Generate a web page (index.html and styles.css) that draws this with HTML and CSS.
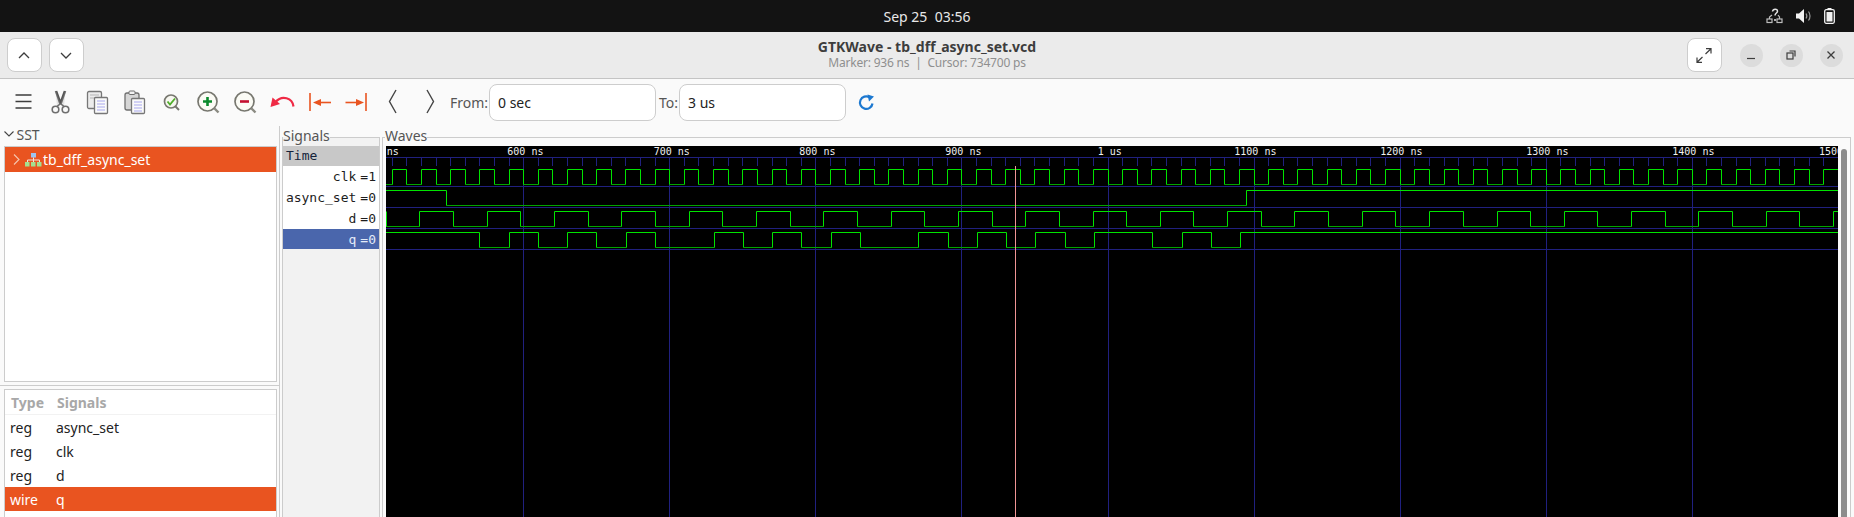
FILE: index.html
```html
<!DOCTYPE html>
<html lang="en">
<head>
    <meta charset="UTF-8">
    <title>GTKWave - tb_dff_async_set.vcd</title>
    <link rel="stylesheet" href="styles.css">
</head>
<body>
    <div class="topbar">
        <span class="clock">Sep 25&nbsp;&nbsp;03:56</span>
        <div class="tray">
            <svg width="17" height="16" viewBox="0 0 17 16" fill="none" stroke="#bdbdbd" stroke-width="1.2">
                <rect x="1" y="11" width="5" height="3.5"/>
                <rect x="11" y="11" width="5" height="3.5"/>
                <path d="M3.5 11V9L6 7M13.5 11V9L12 7"/>
                <path d="M6.5 3.5C7 0.5 11.5 0.5 11.5 3.2C11.5 5 9 5 9 7.5" stroke="#e4e4e4" stroke-width="1.5"/>
                <circle cx="9" cy="12" r="1" fill="#e4e4e4" stroke="none"/>
            </svg>
            <svg width="15" height="16" viewBox="0 0 15 16">
                <path d="M0 5.5H3L8 1V15L3 10.5H0Z" fill="#f2f2f2"/>
                <path d="M10 5.5C11 7 11 9 10 10.5M12.5 3.5C14.5 6 14.5 10 12.5 12.5" fill="none" stroke="#999" stroke-width="1.2"/>
            </svg>
            <svg width="11" height="16" viewBox="0 0 11 16">
                <rect x="3.5" y="0" width="4" height="2" fill="#f2f2f2"/>
                <rect x="0.7" y="1.7" width="9.6" height="13.6" rx="1.5" fill="none" stroke="#f2f2f2" stroke-width="1.3"/>
                <rect x="2.5" y="4" width="6" height="9.5" fill="#f2f2f2"/>
            </svg>
        </div>
    </div>

    <header class="titlebar">
        <div class="title-left">
            <button class="head-btn" type="button">
                <svg width="12" height="7" viewBox="0 0 12 7" fill="none" stroke="#3d3d3d" stroke-width="1.3"><path d="M1 6L6 1L11 6"/></svg>
            </button>
            <button class="head-btn" type="button">
                <svg width="12" height="7" viewBox="0 0 12 7" fill="none" stroke="#3d3d3d" stroke-width="1.3"><path d="M1 1L6 6L11 1"/></svg>
            </button>
        </div>
        <div class="title-text">
            <div class="title-main">GTKWave - tb_dff_async_set.vcd</div>
            <div class="title-sub">Marker: 936 ns&nbsp;&nbsp;|&nbsp;&nbsp;Cursor: 734700 ps</div>
        </div>
        <div class="title-right">
            <button class="head-btn" type="button">
                <svg width="16" height="15" viewBox="0 0 16 15" fill="none" stroke="#3d3d3d" stroke-width="1.2">
                    <path d="M9.5 6L15 0.7M10 0.7H15V5.5M6.5 9L1 14.3M1 9.5V14.3H6"/>
                </svg>
            </button>
            <div class="win-btns">
                <span class="win-btn"><svg width="10" height="10" viewBox="0 0 10 10" stroke="#3d3d3d" stroke-width="1.2"><path d="M1 8.5H9"/></svg></span>
                <span class="win-btn"><svg width="10" height="10" viewBox="0 0 10 10" fill="none" stroke="#3d3d3d" stroke-width="1.2"><rect x="1" y="3" width="6" height="6"/><path d="M3.5 1H9V6.5"/></svg></span>
                <span class="win-btn"><svg width="10" height="10" viewBox="0 0 10 10" stroke="#3d3d3d" stroke-width="1.3"><path d="M1.5 1.5L8.5 8.5M8.5 1.5L1.5 8.5"/></svg></span>
            </div>
        </div>
    </header>

    <div class="toolbar">
        <span class="tool">
            <svg width="37" height="37" viewBox="0 0 37 37" stroke="#3d3d3d" stroke-width="1.5"><path d="M10.5 11H26.5M10.5 17.5H26.5M10.5 24H26.5"/></svg>
        </span>
        <span class="tool">
            <svg width="37" height="37" viewBox="0 0 37 37" fill="none" stroke="#6f6f6f" stroke-width="1.6">
                <path d="M13.5 7L18 20L15 22.5M23.5 7L19 20L22 22.5" fill="#e4e4e4"/>
                <path d="M14.5 7L18.5 18L22.5 7" stroke="#555"/>
                <circle cx="13.5" cy="25.5" r="3.3"/>
                <circle cx="23.5" cy="25.5" r="3.3"/>
            </svg>
        </span>
        <span class="tool">
            <svg width="37" height="37" viewBox="0 0 37 37">
                <rect x="8.5" y="7.5" width="14" height="17" rx="1.5" fill="#ececec" stroke="#777" stroke-width="1.3"/>
                <path d="M11 11H20M11 14H20" stroke="#b5b5b5"/>
                <rect x="15.5" y="13.5" width="13" height="16" rx="1" fill="#fafafa" stroke="#777" stroke-width="1.3"/>
                <path d="M18 17H26M18 20H26M18 23H26M18 26H26" stroke="#a8a8ee"/>
            </svg>
        </span>
        <span class="tool">
            <svg width="37" height="37" viewBox="0 0 37 37">
                <rect x="9" y="9" width="14" height="17" rx="2" fill="#d6d6d6" stroke="#6f6f6f" stroke-width="1.3"/>
                <rect x="13" y="7" width="6" height="3.5" rx="1" fill="#f2f2f2" stroke="#6f6f6f"/>
                <rect x="15.5" y="14.5" width="13" height="15" rx="1" fill="#fafafa" stroke="#777" stroke-width="1.3"/>
                <path d="M18 18H26M18 21H26M18 24H26M18 27H26" stroke="#a8a8ee"/>
            </svg>
        </span>
        <span class="tool">
            <svg width="37" height="37" viewBox="0 0 37 37" fill="none">
                <circle cx="18" cy="17.5" r="6.5" fill="#f7f7f0" stroke="#77776f" stroke-width="1.7"/>
                <path d="M22.5 22.5L26 26" stroke="#77776f" stroke-width="2"/>
                <path d="M14.5 17.5L17 20.5L22 14.5" stroke="#4fae2a" stroke-width="1.8"/>
            </svg>
        </span>
        <span class="tool">
            <svg width="37" height="37" viewBox="0 0 37 37" fill="none">
                <circle cx="17.5" cy="17.5" r="9.5" fill="#fbfbf5" stroke="#77776f" stroke-width="1.7"/>
                <path d="M24.5 24.5L28.5 28.5" stroke="#8a8a82" stroke-width="2.4"/>
                <path d="M13 17.5H22M17.5 13V22" stroke="#0b8a2c" stroke-width="2.6"/>
            </svg>
        </span>
        <span class="tool">
            <svg width="37" height="37" viewBox="0 0 37 37" fill="none">
                <circle cx="17.5" cy="17.5" r="9.5" fill="#fbfbf5" stroke="#77776f" stroke-width="1.7"/>
                <path d="M24.5 24.5L28.5 28.5" stroke="#8a8a82" stroke-width="2.4"/>
                <path d="M13 17.5H22" stroke="#c4102f" stroke-width="2.6"/>
            </svg>
        </span>
        <span class="tool">
            <svg width="37" height="37" viewBox="0 0 37 37" fill="none">
                <path d="M29.5 22.5C28.5 14 18 10.5 11.5 18" stroke="#ef2a45" stroke-width="2.2"/>
                <path d="M6.5 23L8.5 13.5L16 20Z" fill="#ef2a45"/>
            </svg>
        </span>
        <span class="tool">
            <svg width="37" height="37" viewBox="0 0 37 37" fill="none">
                <path d="M9 9V27" stroke="#e95420" stroke-width="1.6"/>
                <path d="M17 18.5H30" stroke="#e95420" stroke-width="1.6"/>
                <path d="M12 18.5L20 15V22Z" fill="#e95420"/>
            </svg>
        </span>
        <span class="tool">
            <svg width="37" height="37" viewBox="0 0 37 37" fill="none">
                <path d="M28 9V27" stroke="#e95420" stroke-width="1.6"/>
                <path d="M7.5 18.5H20" stroke="#e95420" stroke-width="1.6"/>
                <path d="M26 18.5L18 15V22Z" fill="#e95420"/>
            </svg>
        </span>
        <span class="tool">
            <svg width="37" height="37" viewBox="0 0 37 37" fill="none" stroke="#444" stroke-width="1.4"><path d="M21 6L14.5 17.5L21 29"/></svg>
        </span>
        <span class="tool">
            <svg width="37" height="37" viewBox="0 0 37 37" fill="none" stroke="#444" stroke-width="1.4"><path d="M15 6L21.5 17.5L15 29"/></svg>
        </span>
        <label class="range-label from-label" for="fromTime">From:</label>
        <input class="range-input" id="fromTime" type="text" value="0 sec">
        <label class="range-label to-label" for="toTime">To:</label>
        <input class="range-input" id="toTime" type="text" value="3 us">
        <svg class="reload" width="17" height="17" viewBox="0 0 17 17" fill="none">
            <path d="M14.5 9.5A6.3 6.3 0 1 1 11.5 3.2" stroke="#1c78d0" stroke-width="2.2"/>
            <path d="M9.5 0.5L16 2.5L11 7.5Z" fill="#1c78d0"/>
        </svg>
    </div>

    <main class="panes">
        <aside class="left-pane">
            <div class="sst-head">
                <svg width="10" height="6" viewBox="0 0 10 6" fill="none" stroke="#444" stroke-width="1.1"><path d="M0.5 0.5L5 5L9.5 0.5"/></svg>
                <span>SST</span>
            </div>
            <div class="tree-box">
                <div class="tree-row">
                    <svg width="7" height="11" viewBox="0 0 7 11" fill="none" stroke="#f5c6b0" stroke-width="1.1"><path d="M1 0.5L6 5.5L1 10.5"/></svg>
                    <svg class="org-icon" width="17" height="14" viewBox="0 0 17 14">
                        <rect x="6" y="0" width="5" height="4.5" fill="#9fc4ee"/>
                        <path d="M8.5 4.5V7M2.5 9V7H14.5V9M8.5 7V9" stroke="#f6e3da" fill="none"/>
                        <rect x="0" y="9" width="4.5" height="4.5" fill="#a5e090"/>
                        <rect x="6" y="9" width="4.5" height="4.5" fill="#a5e090"/>
                        <rect x="12" y="9" width="4.5" height="4.5" fill="#a5e090"/>
                    </svg>
                    <span>tb_dff_async_set</span>
                </div>
            </div>
            <div class="pane-sep"></div>
            <div class="list-box">
                <div class="list-head">
                    <span class="col-type">Type</span>
                    <span>Signals</span>
                </div>
                <div class="list-row"><span class="col-type">reg</span><span>async_set</span></div>
                <div class="list-row"><span class="col-type">reg</span><span>clk</span></div>
                <div class="list-row"><span class="col-type">reg</span><span>d</span></div>
                <div class="list-row selected"><span class="col-type">wire</span><span>q</span></div>
            </div>
        </aside>

        <fieldset class="frame signals-frame">
            <legend>Signals</legend>
            <div class="sig-time">Time</div>
            <div class="sig-row"><span>clk</span><span class="sig-val">=1</span></div>
            <div class="sig-row"><span>async_set</span><span class="sig-val">=0</span></div>
            <div class="sig-row"><span>d</span><span class="sig-val">=0</span></div>
            <div class="sig-row active"><span>q</span><span class="sig-val">=0</span></div>
        </fieldset>

        <fieldset class="frame waves-frame">
            <legend>Waves</legend>
            <div class="wave-view">
                <svg id="waves" class="wave-canvas" width="1452" height="371" viewBox="386 146 1452 371"></svg>
                <div class="scroll-track"><div class="scroll-thumb"></div></div>
            </div>
        </fieldset>
    </main>

    <script src="waves.js"></script>
</body>
</html>
```

FILE: styles.css
```css
* {
    box-sizing: border-box;
}
html, body {
    margin: 0;
    height: 517px;
    overflow: hidden;
}
body {
    font-family: "Noto Sans", sans-serif;
    font-size: 14px;
    color: #2d2d2d;
    background-color: #fafafa;
}

/* desktop bar */
.topbar {
    position: relative;
    height: 32px;
    background: #131313;
    color: #e8e8e8;
    display: flex;
    align-items: center;
    justify-content: center;
}
.clock {
    font-size: 14px;
}
.tray {
    position: absolute;
    right: 19px;
    top: 8px;
    display: flex;
    align-items: center;
    gap: 13px;
}

/* window title */
.titlebar {
    height: 47px;
    background: #ebebeb;
    border-bottom: 1px solid #c4c4c4;
    display: grid;
    grid-template-columns: 1fr auto 1fr;
    align-items: center;
    padding: 0 6.5px;
}
.title-left, .title-right {
    display: flex;
    align-items: center;
    gap: 7px;
}
.title-right {
    justify-content: flex-end;
}
.head-btn {
    width: 35px;
    height: 34px;
    padding: 0;
    background: #fff;
    border: 1px solid #cdcdcd;
    border-radius: 8px;
    display: flex;
    align-items: center;
    justify-content: center;
}
.title-text {
    text-align: center;
    line-height: 16px;
}
.title-main {
    font-weight: 700;
    font-size: 14px;
    color: #3d3d3d;
}
.title-sub {
    font-size: 12px;
    letter-spacing: -0.2px;
    color: #8f8f8f;
}
.win-btns {
    display: flex;
    gap: 17px;
    margin: 0 5px 0 11px;
}
.win-btn {
    width: 23px;
    height: 23px;
    border-radius: 50%;
    background: #dcdcdc;
    display: flex;
    align-items: center;
    justify-content: center;
}

/* toolbar */
.toolbar {
    height: 47px;
    padding-left: 4.5px;
    display: flex;
    align-items: center;
}
.tool {
    width: 37px;
    height: 37px;
    flex: none;
}
.tool svg {
    display: block;
}
.range-label {
    color: #555;
    font-size: 14px;
}
.from-label {
    margin-left: 1.5px;
    width: 39px;
}
.to-label {
    margin-left: 3px;
    width: 20px;
}
.range-input {
    width: 167px;
    height: 37px;
    padding: 0 8px;
    border: 1px solid #cdcdcd;
    border-radius: 8px;
    background: #fff;
    color: #222;
    font-family: inherit;
    font-size: 14px;
}
.reload {
    margin-left: 12px;
}

/* panes */
.panes {
    height: 391px;
    display: flex;
}
.left-pane {
    width: 280px;
    flex: none;
    border-right: 1px solid #ccc;
    padding-left: 4px;
    overflow: hidden;
}
.sst-head {
    height: 20px;
    padding-bottom: 4px;
    display: flex;
    align-items: center;
    gap: 3px;
    margin-left: -0.5px;
    color: #555;
}
.tree-box {
    width: 273px;
    height: 236px;
    background: #fff;
    border: 1px solid #ccc;
}
.tree-row {
    height: 25px;
    background: #e95420;
    color: #fff;
    display: flex;
    align-items: center;
    padding-left: 8px;
}
.org-icon {
    margin: 0 1px 0 5px;
}
.pane-sep {
    height: 1px;
    margin: 3px 0 3px -4px;
    background: #ccc;
}
.list-box {
    width: 273px;
    height: 140px;
    background: #fff;
    border: 1px solid #ccc;
}
.list-head {
    height: 25px;
    display: flex;
    align-items: center;
    padding-left: 6px;
    font-weight: 700;
    color: #a8a8a8;
    border-bottom: 1px solid #f2f2f2;
}
.list-head .col-type {
    width: 46px;
}
.list-row {
    height: 24px;
    display: flex;
    align-items: center;
    padding-left: 5px;
    color: #222;
}
.list-row .col-type {
    width: 46px;
}
.list-row.selected {
    background: #e95420;
    color: #fff;
}

/* framed panels */
.frame {
    margin: 2px 0 0;
    padding: 0;
    min-width: 0;
    border: 0;
    border-top: 1px solid #ccc;
    border-left: 1px solid #ccc;
    border-right: 1px solid #ccc;
    background: #fafafa;
}
.frame legend {
    padding: 0;
    height: 18px;
    line-height: 16px;
    color: #555;
    font-size: 14px;
}
.signals-frame {
    width: 98px;
    flex: none;
    margin-left: 2px;
    background: #f2f2f2;
}
.sig-time {
    height: 20px;
    line-height: 20px;
    padding-left: 3px;
    background: #c8c8c8;
    color: #14233a;
    font-family: "DejaVu Sans Mono", monospace;
    font-size: 13px;
}
.sig-row {
    height: 21px;
    padding-right: 3px;
    display: flex;
    justify-content: flex-end;
    align-items: center;
    gap: 4px;
    background: #fff;
    color: #1d1d1d;
    font-family: "DejaVu Sans Mono", monospace;
    font-size: 13px;
}
.sig-row.active {
    height: 20px;
    background: #4a66ac;
    color: #e4ebf8;
}
.waves-frame {
    flex: 1;
    margin-left: 2px;
    margin-right: 3.5px;
    padding-left: 3px;
}
.waves-frame legend {
    margin-left: -1px;
}
.wave-view {
    display: flex;
    height: 371px;
}
.wave-canvas {
    display: block;
    flex: none;
    background: #000;
}
.scroll-track {
    flex: 1;
    padding: 3px 3px 0 3px;
}
.scroll-thumb {
    width: 6px;
    height: 100%;
    background: #8c8c8c;
    border-radius: 3px 3px 0 0;
}

/* things drawn in the wave canvas */
.tick {
    stroke: #20207f;
}
.ruler-label {
    fill: #f0f0f0;
    font-family: "DejaVu Sans Mono", monospace;
    font-size: 10px;
}
.trace-high {
    fill: none;
    stroke: #00e400;
}
.trace-low {
    fill: none;
    stroke: #00a400;
}
.cursor {
    stroke: #f09494;
}
```

FILE: waves.js
```js
// x position of a time in ns, 100 ns is about 146 px
const NS = 1.4608;
const X0 = 523.7;
const xOf = (t) => X0 + (t - 600) * NS;
const RIGHT = 1838;

const svg = document.getElementById('waves');

function add(tag, attrs, text) {
    const el = document.createElementNS('http://www.w3.org/2000/svg', tag);
    for (const k in attrs) el.setAttribute(k, attrs[k]);
    if (text) el.textContent = text;
    svg.appendChild(el);
}

const px = (v) => Math.floor(v) + 0.5;

// ruler ticks, every 10 ns
for (let t = 510; t < 1500; t += 10) {
    const x = px(xOf(t));
    const major = t % 100 === 0;
    add('line', { class: 'tick', x1: x, x2: x, y1: 157, y2: major ? 517 : 166 });
}
// row lines
[157, 186, 207, 228, 249].forEach((y) => {
    add('line', { class: 'tick', x1: 386, x2: RIGHT, y1: y + 0.5, y2: y + 0.5 });
});

const labels = [
    ['ns', 386.7], ['600 ns', 507.3], ['700 ns', 653.7], ['800 ns', 799.3],
    ['900 ns', 945.3], ['1 us', 1097.7], ['1100 ns', 1234.3], ['1200 ns', 1380.3],
    ['1300 ns', 1526.3], ['1400 ns', 1672.3], ['1500 ns', 1819]
];
labels.forEach(([s, x]) => add('text', { class: 'ruler-label', x: x, y: 155 }, s));

// clock: 20 ns period, rising at 510 ns
const clkEdges = [];
for (let t = 510; xOf(t) < RIGHT; t += 10) clkEdges.push(xOf(t));

const traces = [
    { top: 169, high: false, edges: clkEdges },
    { top: 190, high: true, edges: [446.3, 1246.3] },
    {
        top: 211, high: false, edges: [
            419.3, 453.3, 487.3, 520.3, 554.3, 588.3, 621.3, 655.7, 689.3, 722.7, 756.3,
            790.3, 823.3, 857.3, 891.3, 924.3, 958.3, 992.3, 1025.3, 1059.3, 1093.3, 1126.3,
            1160.3, 1193.7, 1227.3, 1261.3, 1294.3, 1328.3, 1362.3, 1395.3, 1429.3, 1463.3,
            1497.3, 1530.3, 1564.3, 1597.3, 1631.3, 1665.3, 1698.3, 1732.3, 1766.3, 1799.3, 1833.3
        ]
    },
    {
        top: 232, high: true, edges: [
            479.3, 509.3, 538.3, 567.3, 596.3, 626.3, 655.7, 714.3, 743.3, 772.3, 801.3, 831.3,
            860.3, 918.3, 948.7, 977.3, 1006.3, 1035.3, 1065.3, 1094.3, 1152.3, 1182.3, 1211.3, 1240.3
        ]
    }
];

traces.forEach((tr) => {
    const yHigh = tr.top + 0.5;
    const yLow = tr.top + 15.5;
    let lowPath = '';
    let highPath = '';
    let level = tr.high;
    let from = 386;
    tr.edges.concat(RIGHT).forEach((edge, i, all) => {
        const x = i === all.length - 1 ? RIGHT : px(edge);
        if (level) highPath += `M${from} ${yHigh}H${x}`;
        else lowPath += `M${from} ${yLow}H${x}`;
        if (i < all.length - 1) highPath += `M${x} ${yHigh}V${yLow}`;
        from = x;
        level = !level;
    });
    if (tr.top === 211) highPath += `M386.5 ${yHigh}V${yLow}`;
    add('path', { class: 'trace-low', d: lowPath });
    add('path', { class: 'trace-high', d: highPath });
});

// cursor at 936 ns
add('line', { class: 'cursor', x1: 1015.5, x2: 1015.5, y1: 166, y2: 517 });
```
